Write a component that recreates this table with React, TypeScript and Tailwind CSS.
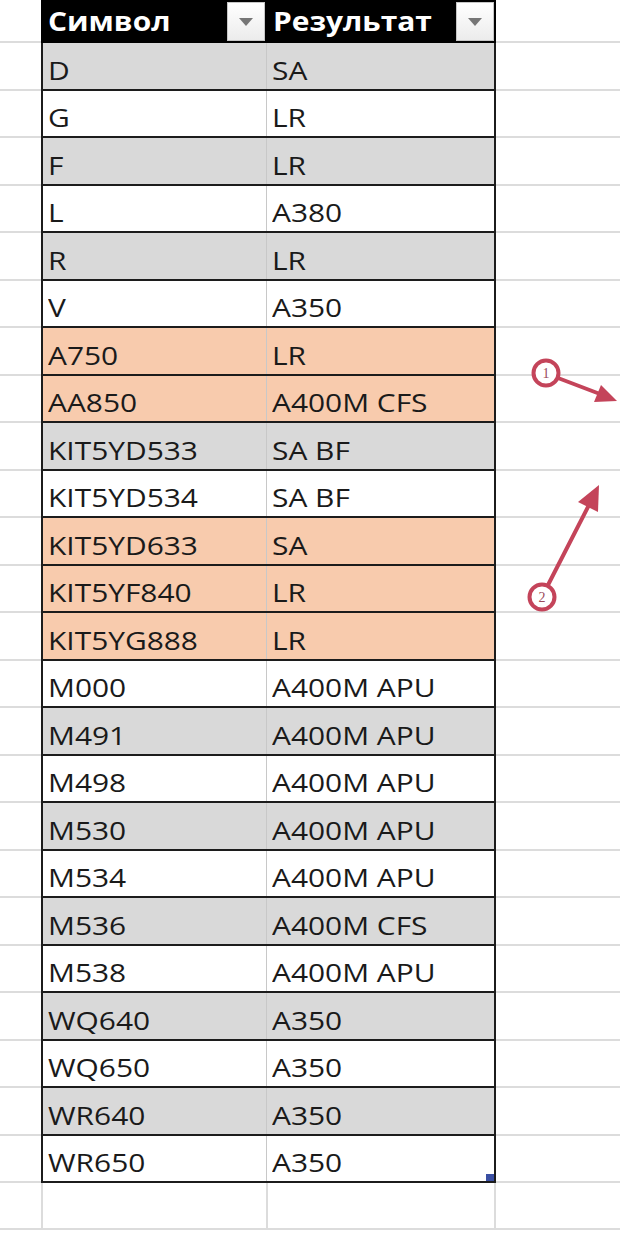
const rows: [string, string, "g" | "w" | "o"][] = [
  ["D", "SA", "g"],
  ["G", "LR", "w"],
  ["F", "LR", "g"],
  ["L", "A380", "w"],
  ["R", "LR", "g"],
  ["V", "A350", "w"],
  ["A750", "LR", "o"],
  ["AA850", "A400M CFS", "o"],
  ["KIT5YD533", "SA BF", "g"],
  ["KIT5YD534", "SA BF", "w"],
  ["KIT5YD633", "SA", "o"],
  ["KIT5YF840", "LR", "o"],
  ["KIT5YG888", "LR", "o"],
  ["M000", "A400M APU", "w"],
  ["M491", "A400M APU", "g"],
  ["M498", "A400M APU", "w"],
  ["M530", "A400M APU", "g"],
  ["M534", "A400M APU", "w"],
  ["M536", "A400M CFS", "g"],
  ["M538", "A400M APU", "w"],
  ["WQ640", "A350", "g"],
  ["WQ650", "A350", "w"],
  ["WR640", "A350", "g"],
  ["WR650", "A350", "w"],
];

const bgs = { g: "bg-[#d9d9d9]", w: "bg-white", o: "bg-[#f8cbad]" };

// the screenshot is a bit stretched sideways, so the text is too
function Txt({ children }: { children: string }) {
  return <span className="inline-block origin-left scale-x-[1.15] whitespace-pre">{children}</span>;
}

function FilterButton() {
  return (
    <div className="flex h-[39px] w-[38px] items-center justify-center border border-[#c6c6c6] bg-gradient-to-b from-white to-[#ececec]">
      <svg width="14" height="8" viewBox="0 0 14 8">
        <polygon points="0,0 14,0 7,8" fill="#767676" />
      </svg>
    </div>
  );
}

function Annotations() {
  return (
    <svg
      className="pointer-events-none absolute left-0 top-0"
      width="620"
      height="1233"
      viewBox="0 0 620 1233"
    >
      <g stroke="#c4445a" strokeWidth="4" fill="none" strokeLinecap="round">
        <line x1="558" y1="378" x2="600" y2="394" />
        <line x1="548" y1="585" x2="590" y2="503" />
        <circle cx="546" cy="373" r="12.5" fill="#fff" />
        <circle cx="542" cy="597" r="12.5" fill="#fff" />
      </g>
      <polygon points="617,401 594,402 601,385" fill="#c4445a" />
      <polygon points="599,485 598,512 578,502" fill="#c4445a" />
      <text
        x="546"
        y="378"
        textAnchor="middle"
        fontSize="14"
        fill="#9a4a5a"
        style={{ fontFamily: '"Liberation Serif", serif' }}
      >
        1
      </text>
      <text
        x="542"
        y="602"
        textAnchor="middle"
        fontSize="14"
        fill="#9a4a5a"
        style={{ fontFamily: '"Liberation Serif", serif' }}
      >
        2
      </text>
    </svg>
  );
}

export default function App() {
  return (
    <div
      className="relative h-[1233px] w-[620px] overflow-hidden bg-white text-[26px] leading-none text-[#1a1a1a]"
      style={{ fontFamily: '"Open Sans", "Noto Sans", sans-serif' }}
    >
      {/* header */}
      <div className="flex h-[43px]">
        <div className="w-[41px] border-b-2 border-[#dcdcdc]" />
        <div className="flex w-[455px] bg-black font-bold text-white">
          <div className="flex w-[227px] items-start justify-between pl-[7px] pr-[3px] pt-[2px]">
            <span className="pt-[6px]">
              <Txt>Символ</Txt>
            </span>
            <FilterButton />
          </div>
          <div className="flex flex-1 items-start justify-between pl-[5px] pr-[2px] pt-[2px]">
            <span className="pt-[6px]">
              <Txt>Результат</Txt>
            </span>
            <FilterButton />
          </div>
        </div>
        <div className="flex-1 border-b-2 border-[#dcdcdc]" />
      </div>

      {rows.map(([a, b, c], i) => (
        <div key={a} className={`flex ${i % 2 === 0 ? "h-[48px]" : "h-[47px]"}`}>
          <div className="w-[41px] border-b-2 border-[#dcdcdc]" />
          <div className={`flex w-[455px] border-x-2 border-b-2 border-[#1c1c1c] ${bgs[c]}`}>
            <div className="flex w-[224px] items-end border-r border-[#c8c8c8] pb-[6px] pl-[5px]">
              <Txt>{a}</Txt>
            </div>
            <div className="relative flex flex-1 items-end pb-[6px] pl-[5px]">
              <Txt>{b}</Txt>
              {i === rows.length - 1 && (
                <div className="absolute bottom-0 right-0 h-[7px] w-[8px] bg-[#3a4fa3]" />
              )}
            </div>
          </div>
          <div className="flex-1 border-b-2 border-[#dcdcdc]" />
        </div>
      ))}

      {/* empty sheet row */}
      <div className="flex h-[47px]">
        <div className="w-[41px] border-b-2 border-[#dcdcdc]" />
        <div className="flex w-[455px] border-x-2 border-b-2 border-[#dcdcdc]">
          <div className="w-[225px] border-r-2 border-[#dcdcdc]" />
          <div className="flex-1" />
        </div>
        <div className="flex-1 border-b-2 border-[#dcdcdc]" />
      </div>

      <Annotations />
    </div>
  );
}
